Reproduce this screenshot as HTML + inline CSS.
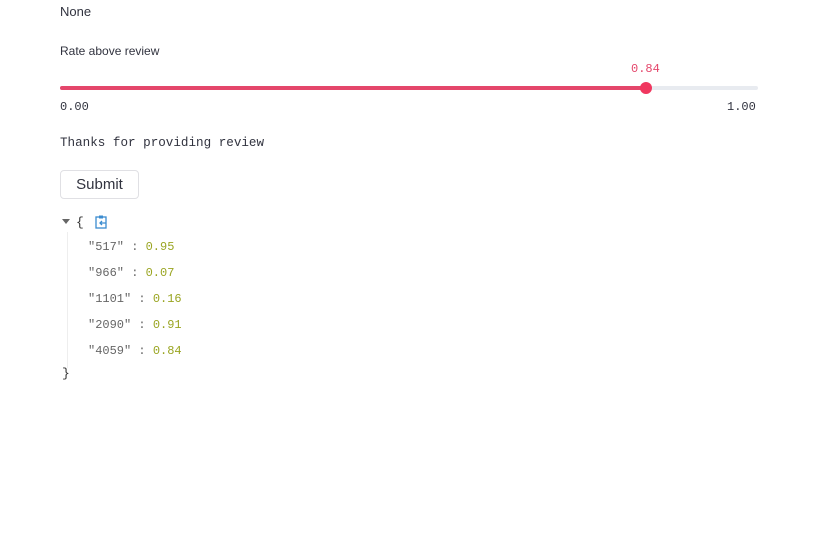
<!DOCTYPE html>
<html><head><style>
body{margin:0;width:818px;height:538px;background:#fff;position:relative;font-family:"Liberation Sans",sans-serif;color:#262730;overflow:hidden}
.a{position:absolute;white-space:nowrap}
.m{font-family:"Liberation Mono",monospace}
</style></head><body>
<div class="a" style="left:60px;top:4px;font-size:13px;color:#31333f">None</div>
<div class="a" style="left:60px;top:44px;font-size:12px;color:#31333f">Rate above review</div>
<div class="a m" style="left:631px;top:62px;font-size:12px;color:#e4466b">0.84</div>
<div class="a" style="left:60px;top:86px;width:698px;height:4px;background:#e8ebf0;border-radius:2px"></div>
<div class="a" style="left:60px;top:86px;width:586px;height:4px;background:#e4466b;border-radius:2px"></div>
<div class="a" style="left:640px;top:82px;width:12px;height:12px;background:#f0375f;border-radius:50%"></div>
<div class="a m" style="left:60px;top:100px;font-size:12px;color:#31333f">0.00</div>
<div class="a m" style="left:727px;top:100px;font-size:12px;color:#31333f">1.00</div>
<div class="a m" style="left:60px;top:136px;font-size:12.6px;color:#31333f">Thanks for providing review</div>
<div class="a" style="left:60px;top:170px;width:77px;height:27px;border:1px solid #e0e0e4;border-radius:4px;font-size:15px;line-height:27px;text-align:center;color:#31333f">Submit</div>
<div class="a" style="left:62px;top:219px;width:0;height:0;border-left:4px solid transparent;border-right:4px solid transparent;border-top:5px solid #666"></div>
<div class="a m" style="left:76px;top:215px;font-size:13px;color:#333">{</div>
<svg class="a" style="left:95px;top:215px" width="13" height="14" viewBox="0 0 13 14"><rect x="1" y="2" width="10" height="11" fill="none" stroke="#3b8cd0" stroke-width="1.3"/><rect x="4" y="0.5" width="4" height="3" fill="#3b8cd0"/><path d="M11 8H5M7 6L5 8L7 10" stroke="#3b8cd0" stroke-width="1.3" fill="none"/></svg>
<div class="a" style="left:67px;top:232px;width:1px;height:136px;background:#eee"></div>
<div class="m" style="position:absolute;left:88px;top:234px;font-size:12px;line-height:26px;color:#666">
<div>"517" : <span style="color:#9aa522">0.95</span></div>
<div>"966" : <span style="color:#9aa522">0.07</span></div>
<div>"1101" : <span style="color:#9aa522">0.16</span></div>
<div>"2090" : <span style="color:#9aa522">0.91</span></div>
<div>"4059" : <span style="color:#9aa522">0.84</span></div>
</div>
<div class="a m" style="left:62px;top:366px;font-size:13px;color:#333">}</div>
</body></html>
